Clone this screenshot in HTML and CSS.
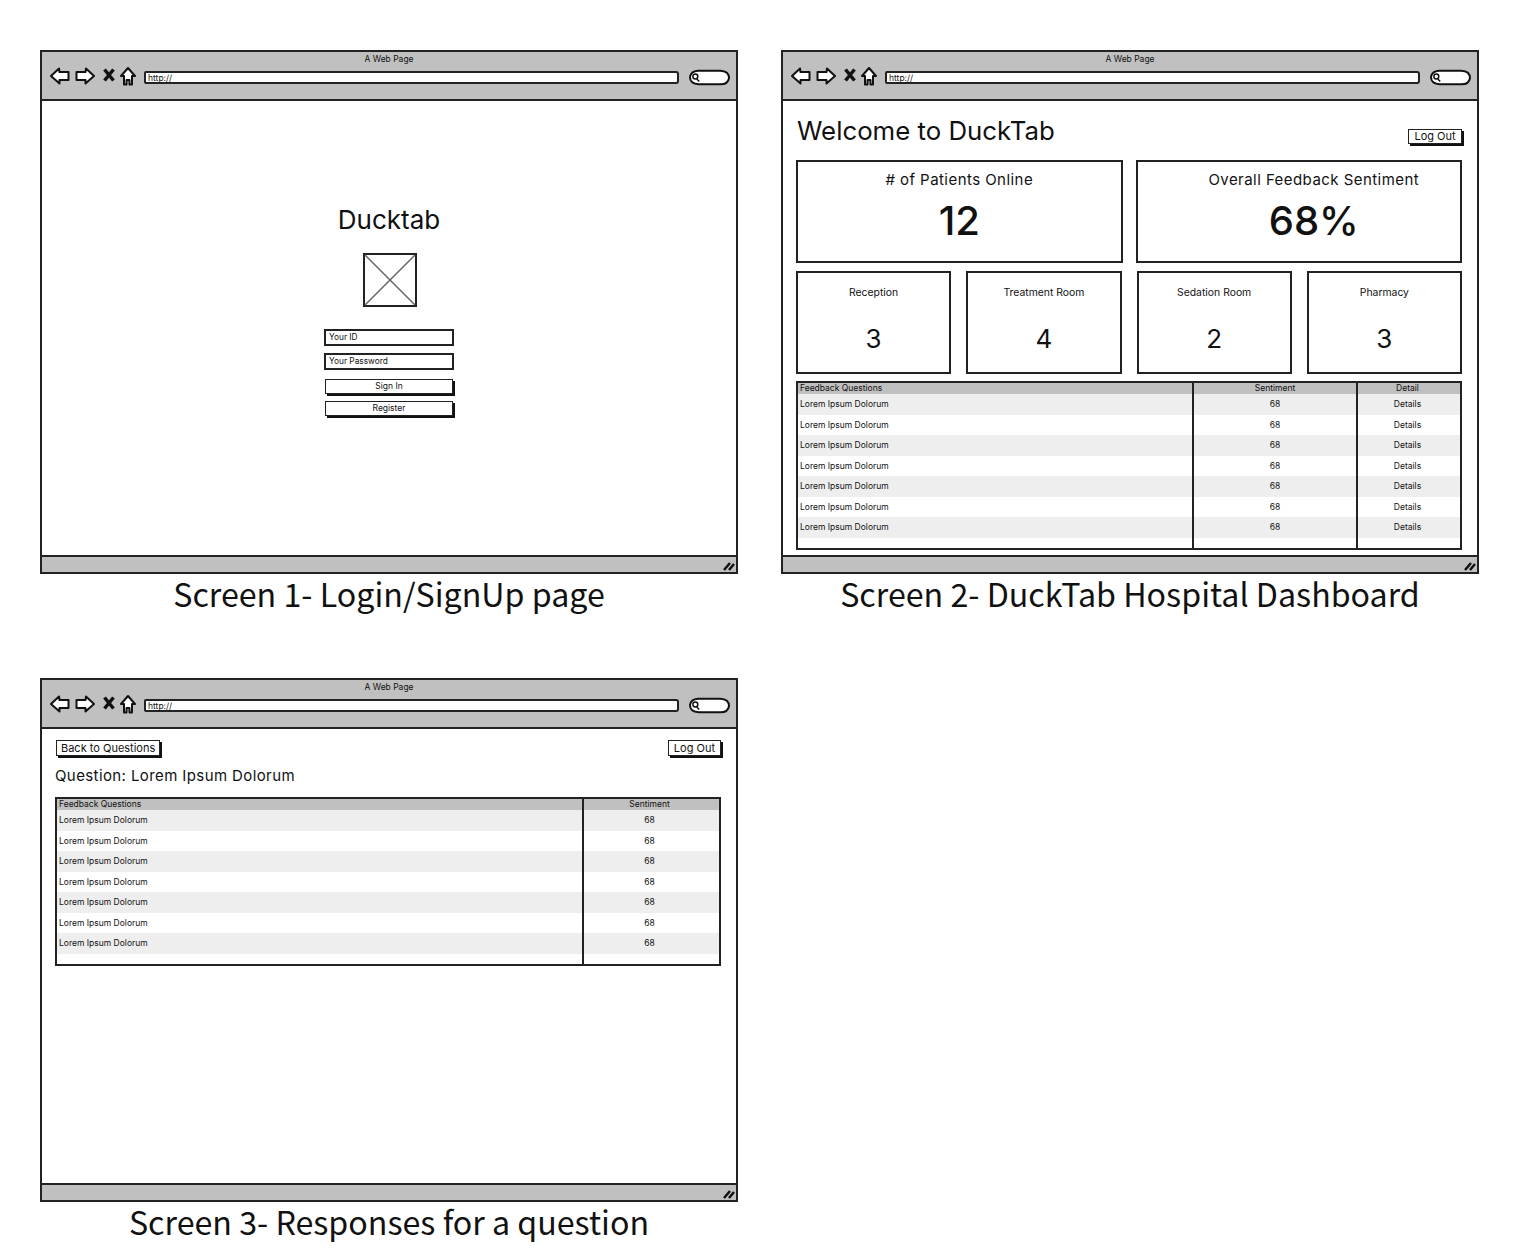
FILE: index.html
```html
<!DOCTYPE html>
<html lang="en">
<head>
  <meta charset="utf-8">
  <title>DuckTab Wireframes</title>
  <link rel="stylesheet" href="styles.css">
</head>
<body>
  <svg class="defs" width="0" height="0">
    <symbol id="i-back" viewBox="0 0 20 18"><path d="M1 9 L9 1.5 L9.500 5 L18.500 5 L18.500 13 L9.500 13 L9.500 16.500 Z"/></symbol>
    <symbol id="i-fwd" viewBox="0 0 20 18"><path d="M19 9 L11 1.500 L10.500 5 L1.500 5 L1.500 13 L10.500 13 L10.500 16.500 Z"/></symbol>
    <symbol id="i-home" viewBox="0 0 16 19"><path d="M8 1 L15 9 L12 9 L12 17.500 L9.500 17.500 L9.500 13 L6.500 13 L6.500 17.500 L4 17.500 L4 9 L1 9 Z"/></symbol>
    <symbol id="i-grip" viewBox="0 0 12 10"><path d="M1 9 L7 2 M6 9 L11 3"/></symbol>
  </svg>

  <div class="sheet">

    <!-- Screen 1 -->
    <figure class="screen">
      <div class="window">
        <div class="chrome">
          <div class="chrome-title">A Web Page</div>
          <div class="toolbar">
            <svg class="ico ico-arrow"><use href="#i-back"/></svg>
            <svg class="ico ico-arrow"><use href="#i-fwd"/></svg>
            <svg class="ico-x" viewBox="0 0 12 14"><path d="M1.500 1.500 L10.500 12.500 M10.500 1.500 L1.500 12.500"/></svg>
            <svg class="ico ico-home"><use href="#i-home"/></svg>
            <div class="urlbar">http://</div>
            <svg class="search" viewBox="0 0 42 17"><path class="pill" d="M9 1.500 L32 1.500 Q41 2 41 9 Q40 15.500 32 15.500 L10 15.500 Q1 15 1 8 Q2 2 9 1.500 Z"/><circle class="lens" cx="6.500" cy="7.500" r="2.500"/><path class="lens" d="M8 10 L10.500 12.500"/></svg>
          </div>
        </div>
        <div class="page page-login">
          <h2 class="login-title">Ducktab</h2>
          <svg class="placeholder" viewBox="0 0 54 54"><rect x="1" y="1" width="52" height="52"/><path d="M2 2 L52 52 M52 2 L2 52"/></svg>
          <div class="field field-first">Your ID</div>
          <div class="field">Your Password</div>
          <div class="btn btn-wide btn-first">Sign In</div>
          <div class="btn btn-wide">Register</div>
        </div>
        <div class="statusbar"><svg class="grip"><use href="#i-grip"/></svg></div>
      </div>
      <figcaption>Screen 1- Login/SignUp page</figcaption>
    </figure>

    <!-- Screen 2 -->
    <figure class="screen">
      <div class="window">
        <div class="chrome">
          <div class="chrome-title">A Web Page</div>
          <div class="toolbar">
            <svg class="ico ico-arrow"><use href="#i-back"/></svg>
            <svg class="ico ico-arrow"><use href="#i-fwd"/></svg>
            <svg class="ico-x" viewBox="0 0 12 14"><path d="M1.500 1.500 L10.500 12.500 M10.500 1.500 L1.500 12.500"/></svg>
            <svg class="ico ico-home"><use href="#i-home"/></svg>
            <div class="urlbar">http://</div>
            <svg class="search" viewBox="0 0 42 17"><path class="pill" d="M9 1.500 L32 1.500 Q41 2 41 9 Q40 15.500 32 15.500 L10 15.500 Q1 15 1 8 Q2 2 9 1.500 Z"/><circle class="lens" cx="6.500" cy="7.500" r="2.500"/><path class="lens" d="M8 10 L10.500 12.500"/></svg>
          </div>
        </div>
        <div class="page page-dash">
          <div class="dash-head">
            <h1 class="dash-title">Welcome to DuckTab</h1>
            <div class="btn">Log Out</div>
          </div>
          <div class="stats stats-main">
            <div class="card card-large"><div class="card-label">
              # of Patients Online</div><div class="card-value">12</div></div>
            <div class="card card-large card-offset"><div class="card-label">Overall Feedback Sentiment</div><div class="card-value">68%</div></div>
          </div>
          <div class="stats stats-rooms">
            <div class="card"><div class="card-label">Reception</div><div class="card-value">3</div></div>
            <div class="card"><div class="card-label">Treatment Room</div><div class="card-value">4</div></div>
            <div class="card"><div class="card-label">Sedation Room</div><div class="card-value">2</div></div>
            <div class="card"><div class="card-label">Pharmacy</div><div class="card-value">3</div></div>
          </div>
          <table class="grid grid-dash">
            <thead><tr><th>Feedback Questions</th><th class="col-num">Sentiment</th><th class="col-detail">Detail</th></tr></thead>
            <tbody>
              <tr><td>Lorem Ipsum Dolorum</td><td class="col-num">68</td><td class="col-detail">Details</td></tr>
              <tr><td>Lorem Ipsum Dolorum</td><td class="col-num">68</td><td class="col-detail">Details</td></tr>
              <tr><td>Lorem Ipsum Dolorum</td><td class="col-num">68</td><td class="col-detail">Details</td></tr>
              <tr><td>Lorem Ipsum Dolorum</td><td class="col-num">68</td><td class="col-detail">Details</td></tr>
              <tr><td>Lorem Ipsum Dolorum</td><td class="col-num">68</td><td class="col-detail">Details</td></tr>
              <tr><td>Lorem Ipsum Dolorum</td><td class="col-num">68</td><td class="col-detail">Details</td></tr>
              <tr><td>Lorem Ipsum Dolorum</td><td class="col-num">68</td><td class="col-detail">Details</td></tr>
              <tr class="filler"><td></td><td class="col-num"></td><td class="col-detail"></td></tr>
            </tbody>
          </table>
        </div>
        <div class="statusbar"><svg class="grip"><use href="#i-grip"/></svg></div>
      </div>
      <figcaption>Screen 2- DuckTab Hospital Dashboard</figcaption>
    </figure>

    <!-- Screen 3 -->
    <figure class="screen">
      <div class="window">
        <div class="chrome">
          <div class="chrome-title">A Web Page</div>
          <div class="toolbar">
            <svg class="ico ico-arrow"><use href="#i-back"/></svg>
            <svg class="ico ico-arrow"><use href="#i-fwd"/></svg>
            <svg class="ico-x" viewBox="0 0 12 14"><path d="M1.500 1.500 L10.500 12.500 M10.500 1.500 L1.500 12.500"/></svg>
            <svg class="ico ico-home"><use href="#i-home"/></svg>
            <div class="urlbar">http://</div>
            <svg class="search" viewBox="0 0 42 17"><path class="pill" d="M9 1.500 L32 1.500 Q41 2 41 9 Q40 15.500 32 15.500 L10 15.500 Q1 15 1 8 Q2 2 9 1.500 Z"/><circle class="lens" cx="6.500" cy="7.500" r="2.500"/><path class="lens" d="M8 10 L10.500 12.500"/></svg>
          </div>
        </div>
        <div class="page page-question">
          <div class="question-head">
            <div class="btn">Back to Questions</div>
            <div class="btn">Log Out</div>
          </div>
          <h2 class="question-title">Question: Lorem Ipsum Dolorum</h2>
          <table class="grid grid-question">
            <thead><tr><th>Feedback Questions</th><th class="col-num">Sentiment</th></tr></thead>
            <tbody>
              <tr><td>Lorem Ipsum Dolorum</td><td class="col-num">68</td></tr>
              <tr><td>Lorem Ipsum Dolorum</td><td class="col-num">68</td></tr>
              <tr><td>Lorem Ipsum Dolorum</td><td class="col-num">68</td></tr>
              <tr><td>Lorem Ipsum Dolorum</td><td class="col-num">68</td></tr>
              <tr><td>Lorem Ipsum Dolorum</td><td class="col-num">68</td></tr>
              <tr><td>Lorem Ipsum Dolorum</td><td class="col-num">68</td></tr>
              <tr><td>Lorem Ipsum Dolorum</td><td class="col-num">68</td></tr>
              <tr class="filler"><td></td><td class="col-num"></td></tr>
            </tbody>
          </table>
        </div>
        <div class="statusbar"><svg class="grip"><use href="#i-grip"/></svg></div>
      </div>
      <figcaption>Screen 3- Responses for a question</figcaption>
    </figure>

  </div>
</body>
</html>
```

FILE: styles.css
```css
body {
  margin: 0;
  background: #fff;
  color: #111;
  font-family: Inter, "Liberation Sans", sans-serif;
}
.defs {
  display: block;
  height: 0;
}
.sheet {
  display: grid;
  grid-template-columns: 698px 698px;
  grid-auto-rows: 628px;
  column-gap: 43px;
  padding: 50px 0 0 40px;
}
.screen {
  margin: 0;
}
figcaption {
  height: 44px;
  line-height: 38px;
  text-align: center;
  font-family: "Noto Sans CJK SC", "Noto Sans", sans-serif;
  font-size: 32.200px;
  color: #111;
}

/* browser window */
.window {
  box-sizing: border-box;
  display: flex;
  flex-direction: column;
  height: 524px;
  border: 2px solid #222;
}
.chrome {
  box-sizing: border-box;
  height: 49px;
  flex-shrink: 0;
  background: #c0c0c0;
  border-bottom: 2px solid #222;
}
.chrome-title {
  height: 12px;
  padding-top: 1px;
  line-height: 12px;
  text-align: center;
  font-size: 8.500px;
}
.toolbar {
  display: flex;
  align-items: center;
  height: 20px;
  margin-top: 1px;
  padding: 0 6px 0 8px;
}
.ico {
  fill: #fff;
  stroke: #111;
  stroke-width: 2;
  stroke-linejoin: round;
}
.ico-arrow {
  width: 20px;
  height: 18px;
  margin-right: 5px;
}
.ico-x {
  width: 12px;
  height: 14px;
  margin: 0 5px 2px 3px;
  fill: none;
  stroke: #111;
  stroke-width: 3.500;
}
.ico-home {
  width: 16px;
  height: 19px;
  margin-right: 8px;
}
.urlbar {
  box-sizing: border-box;
  flex: 1;
  height: 13px;
  margin-top: 2px;
  padding-left: 2px;
  background: #fff;
  border: 2px solid #222;
  border-radius: 2px 3px 3px 2px;
  line-height: 10px;
  font-size: 8.500px;
}
.search {
  width: 41px;
  height: 17px;
  margin: 2px 0 0 10px;
}
.pill {
  fill: #fff;
  stroke: #111;
  stroke-width: 2;
}
.lens {
  fill: none;
  stroke: #111;
  stroke-width: 1.500;
}
.statusbar {
  position: relative;
  box-sizing: border-box;
  height: 17px;
  flex-shrink: 0;
  background: #c0c0c0;
  border-top: 2px solid #222;
}
.grip {
  position: absolute;
  right: 1px;
  bottom: 1px;
  width: 12px;
  height: 10px;
  fill: none;
  stroke: #111;
  stroke-width: 2.500;
}
.page {
  flex: 1;
  background: #fff;
}

/* shared widgets */
.btn {
  box-sizing: border-box;
  height: 15px;
  padding: 0 4px;
  background: #fff;
  border: 1px solid #222;
  box-shadow: 2px 2px 0 #111;
  line-height: 13px;
  text-align: center;
  font-size: 11px;
}

/* screen 1 */
.page-login {
  display: flex;
  flex-direction: column;
  align-items: center;
  padding-top: 103px;
}
.login-title {
  margin: 0;
  height: 32px;
  line-height: 32px;
  font-size: 26px;
  font-weight: 400;
}
.placeholder {
  width: 54px;
  height: 54px;
  margin: 17px 0 0 2px;
}
.placeholder rect {
  fill: #fff;
  stroke: #222;
  stroke-width: 2;
}
.placeholder path {
  stroke: #666;
  stroke-width: 1.500;
}
.field {
  box-sizing: border-box;
  width: 130px;
  height: 17px;
  margin-top: 7px;
  padding-left: 3px;
  border: 2px solid #222;
  line-height: 13px;
  font-size: 8.300px;
}
.field-first {
  margin-top: 22px;
}
.btn-wide {
  width: 128px;
  margin-top: 7px;
  font-size: 8.500px;
}
.btn-first {
  margin-top: 9px;
}

/* screen 2 */
.page-dash {
  padding: 0 15px 0 13px;
}
.dash-head {
  display: flex;
  justify-content: space-between;
  height: 59px;
}
.dash-title {
  margin: 15px 0 0 1px;
  line-height: 30px;
  font-size: 25.800px;
  font-weight: 400;
}
.dash-head .btn {
  width: 54px;
  margin-top: 28px;
  padding: 0;
}
.stats {
  display: grid;
}
.stats-main {
  grid-template-columns: 1fr 1fr;
  column-gap: 13px;
}
.stats-rooms {
  grid-template-columns: repeat(4, 1fr);
  column-gap: 15px;
  margin-top: 8px;
}
.card {
  box-sizing: border-box;
  height: 103px;
  border: 2px solid #222;
  text-align: center;
}
.card-label {
  margin-top: 13px;
  line-height: 14px;
  font-size: 10.400px;
}
.card-value {
  margin-top: 24px;
  line-height: 30px;
  font-size: 26px;
}
.card-large .card-label {
  margin-top: 9px;
  line-height: 18px;
  font-size: 15px;
  letter-spacing: 0.450px;
}
.card-large .card-value {
  margin-top: 9px;
  line-height: 46px;
  font-size: 40px;
  font-weight: 500;
}
.card-offset {
  padding-left: 30px;
}

/* tables */
.grid {
  box-sizing: border-box;
  width: 100%;
  height: 169px;
  margin-top: 7px;
  border: 2px solid #222;
  border-collapse: separate;
  border-spacing: 0;
  table-layout: fixed;
  font-size: 8.500px;
}
.grid th {
  height: 11px;
  padding: 0 0 0 2px;
  background: #c0c0c0;
  font-weight: 400;
  line-height: 10px;
  text-align: left;
  vertical-align: top;
}
.grid td {
  height: 20.500px;
  padding: 0 0 0 2px;
  line-height: 20px;
  vertical-align: top;
}
.grid tbody tr:nth-child(odd) td {
  background: #eee;
}
.grid .filler td,
.grid tbody tr.filler:nth-child(odd) td {
  height: auto;
  background: #fff;
}
.grid .col-num,
.grid .col-detail {
  padding: 0;
  text-align: center;
  border-left: 2px solid #222;
}
.grid .col-detail {
  padding-right: 3px;
}
.grid-dash .col-num {
  width: 162px;
}
.grid-dash .col-detail {
  width: 99px;
}
.grid-question {
  margin-top: 11px;
}
.grid-question .col-num {
  width: 131px;
  padding-right: 4px;
}

/* screen 3 */
.page-question {
  padding: 0 15px 0 13px;
}
.question-head {
  display: flex;
  justify-content: space-between;
  padding: 11px 0 0 1px;
}
.question-head .btn {
  height: 16px;
  padding: 0 5px;
  line-height: 14px;
}
.question-head .btn:first-child {
  padding: 0 4px;
}
.question-title {
  margin: 10px 0 0;
  line-height: 20px;
  font-size: 15px;
  font-weight: 400;
  letter-spacing: 0.400px;
}
```
